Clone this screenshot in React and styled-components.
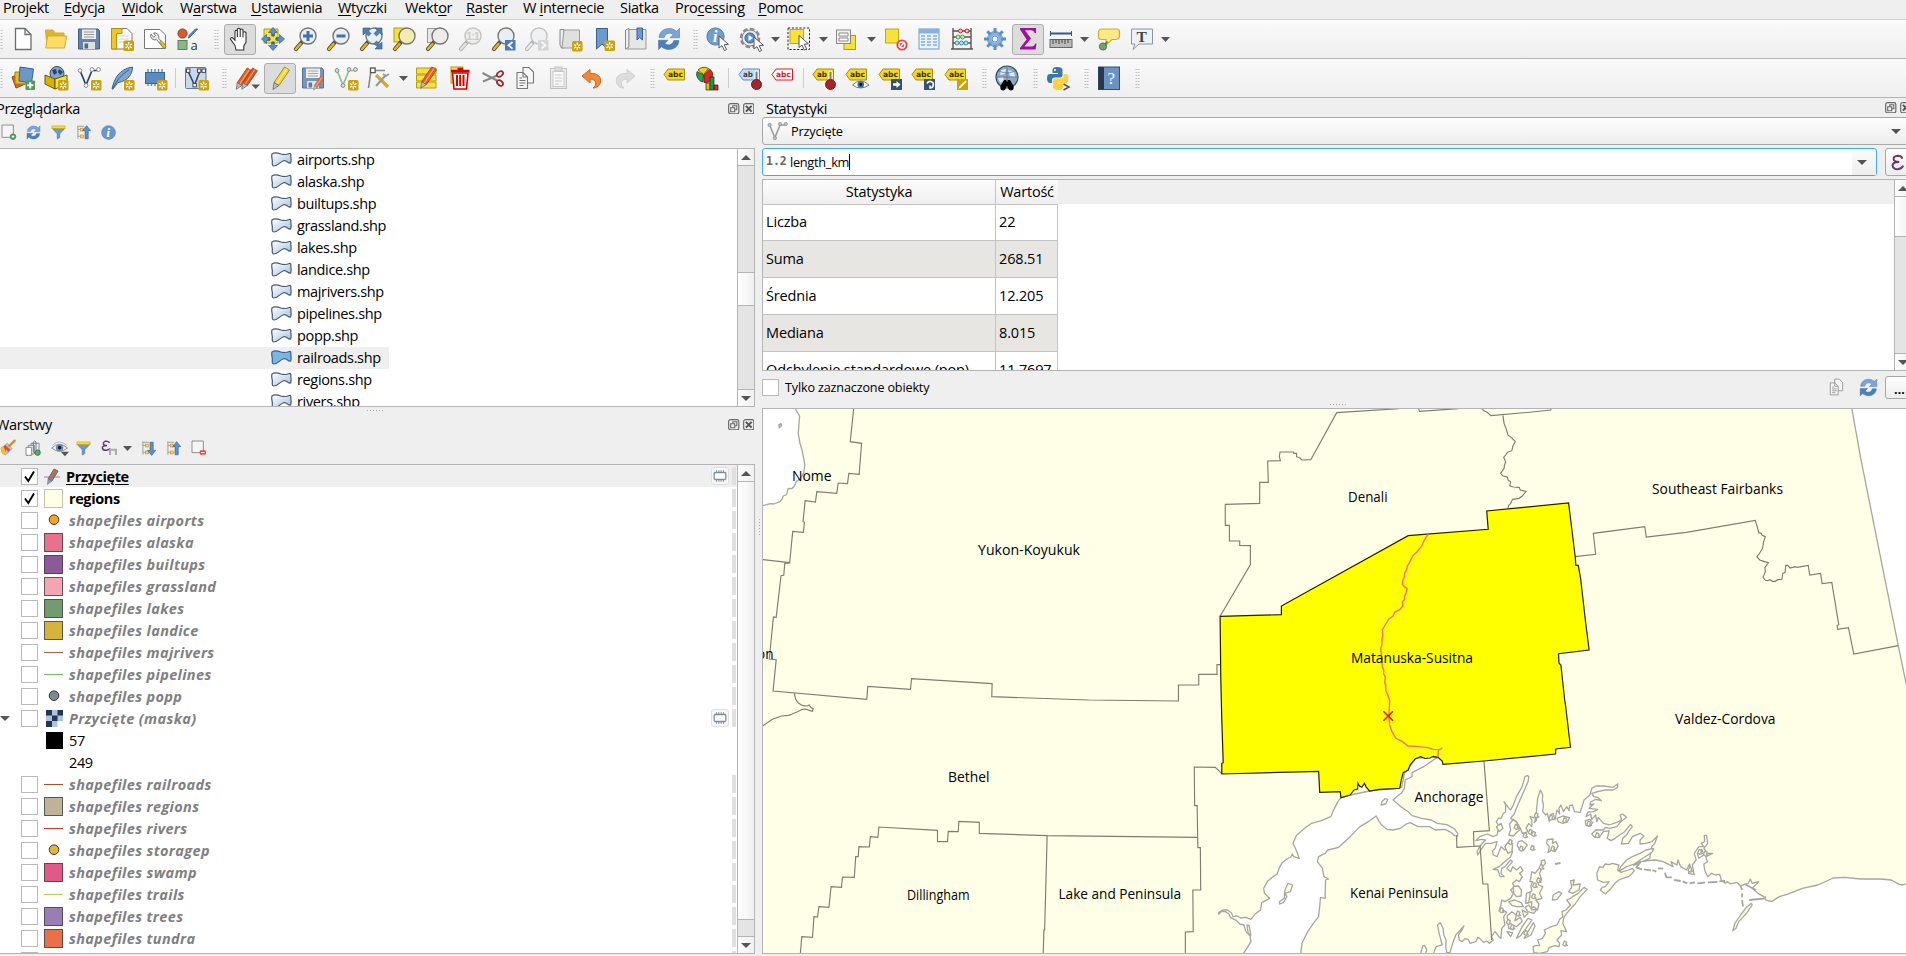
import React from 'react';
import styled, { createGlobalStyle } from 'styled-components';

const UI = '"Open Sans", "Noto Sans", sans-serif';

const GlobalStyle = createGlobalStyle`
  * { box-sizing: border-box; }
  body { margin: 0; background: #efefef; overflow: hidden; }
  svg { display: block; flex: none; }
`;

const Window = styled.div`
  width: 1906px;
  height: 956px;
  overflow: hidden;
  display: flex;
  flex-direction: column;
  background: #efefef;
  color: #000;
  font-family: ${UI};
  font-size: 14.5px;
  white-space: nowrap;
`;

/* ---------- menu and toolbars ---------- */

const MenuBar = styled.nav`
  height: 20px;
  flex: none;
  display: flex;
  padding-left: 3px;
  border-bottom: 1px solid #cfcfcf;
`;

const MenuItem = styled.span`
  width: ${(p) => p.$w}px;
  flex: none;
  line-height: 16px;
  letter-spacing: -0.3px;
  u { text-underline-offset: 2px; text-decoration-thickness: 1px; }
`;

const ToolBar = styled.div`
  height: 39px;
  flex: none;
  display: flex;
  align-items: center;
  background: linear-gradient(#fafafa, #efefef);
  border-bottom: 1px solid #b4b4b4;
`;

const ToolCell = styled.div`
  width: 33px;
  flex: none;
  display: flex;
  justify-content: center;
`;

const ToolButton = styled.div`
  width: 32px;
  height: 31px;
  display: flex;
  align-items: center;
  justify-content: center;
  border-radius: 3px;
  border: 1px solid ${(p) => (p.$on ? '#acacac' : 'transparent')};
  background: ${(p) => (p.$on ? '#dcdcdc' : 'transparent')};
  opacity: ${(p) => (p.$off ? 0.4 : 1)};
`;

const Grip = styled.div`
  width: ${(p) => p.$w || 18}px;
  height: 20px;
  flex: none;
  display: flex;
  justify-content: flex-end;
  padding-right: 4px;
  &::after {
    content: '';
    width: 5px;
    flex: none;
    background-image: radial-gradient(circle, #b2b2b2 0.7px, transparent 0.9px);
    background-size: 2.5px 3px;
  }
`;

const Divider = styled.div`
  width: ${(p) => p.$w || 8}px;
  height: 20px;
  flex: none;
  display: flex;
  justify-content: center;
  &::after { content: ''; width: 1px; background: #cdcdcd; }
`;

const ArrowCell = styled.div`
  width: 15.2px;
  flex: none;
  display: flex;
  padding-left: 3px;
`;

const Arrow = ({ up, w = 9, c = '#555' }) => (
  <svg width={w} height="5" viewBox="0 0 10 5" preserveAspectRatio="none">
    <path d={up ? 'M0 5L5 0L10 5Z' : 'M0 0L5 5L10 0Z'} fill={c} />
  </svg>
);

/* ---------- icon parts ---------- */

const Spark = ({ x = 14, y = 14 }) => (
  <g transform={`translate(${x} ${y})`}>
    <rect width="10.5" height="10.5" rx="1.5" fill="#c8a30b" />
    <path d="M5.2 1.6V9M2 3.4L8.4 7.2M8.4 3.4L2 7.2" stroke="#fff" strokeWidth="1.2" />
    <circle cx="5.2" cy="5.3" r="1.2" fill="#c8a30b" />
  </g>
);

const Lens = ({ fill = '#e8eef4', rim = '#777', handle = '#e9b416' }) => (
  <g>
    <path d="M8 15L2 22" stroke="#444" strokeWidth="4.2" strokeLinecap="round" />
    <path d="M6.5 17L2 22" stroke={handle} strokeWidth="2.6" strokeLinecap="round" />
    <circle cx="14" cy="9" r="8" fill={fill} stroke={rim} strokeWidth="1.4" />
  </g>
);

const Cursor = ({ x = 12, y = 9 }) => (
  <path transform={`translate(${x} ${y})`} d="M0 0L0 12L3 9.6L5.4 14.6L7.6 13.5L5.2 8.7L9.4 8.3Z" fill="#fff" stroke="#555" />
);

const Tag = ({ fill = '#f5d91c', edge = '#a98b10', text = 'abc', ink = '#3a3000', y = 3 }) => (
  <g>
    <path d={`M1 ${y + 5.5}L5 ${y}H21.5V${y + 11}H5Z`} fill={fill} stroke={edge} />
    <text x="5" y={y + 8.4} fontFamily="DejaVu Sans, sans-serif" fontWeight="700" fontSize="7.6" textLength={text.length * 5} lengthAdjust="spacingAndGlyphs" fill={ink}>{text}</text>
  </g>
);

const Pin = () => (
  <g>
    <path d="M18.5 16V6.5" stroke="#fff" strokeWidth="4" strokeLinecap="round" />
    <path d="M18.5 16V6.5" stroke="#777" strokeWidth="2" strokeLinecap="round" />
    <circle cx="18.5" cy="18.5" r="5" fill="#a3262a" stroke="#7c1a1d" />
  </g>
);

const Pencil = ({ body = '#e8601c', edge = '#9a3c0c', t }) => (
  <g transform={t}>
    <path d="M16.5 1L21.5 4L11 19.5L6 16.5Z" fill={body} stroke={edge} strokeWidth=".8" />
    <path d="M18.8 2.6L8.6 18" stroke="#fff" strokeOpacity=".45" strokeWidth="1.2" />
    <path d="M6 16.5L11 19.5L5 23.5Z" fill="#b9bcbc" stroke="#666" strokeWidth=".8" />
  </g>
);

const Vee = ({ c = '#2d4356', node = '#fff', nodeEdge = '#888' }) => (
  <g>
    <path d="M3 4.5L9 19L15 4.5H21" fill="none" stroke={c} strokeWidth="1.7" />
    {[[3, 4.5], [9, 19.5], [15, 3.5], [21.5, 3.5]].map(([x, y]) => (
      <circle key={x} cx={x} cy={y} r="1.9" fill={node} stroke={nodeEdge} />
    ))}
  </g>
);

const Refresh = () => (
  <g fill="#5b8fc7" stroke="#3c6c9f" strokeWidth=".5">
    <path d="M2 10.5C2.5 4 8 1 13.5 1.6C16 1.9 18 3 19.5 4.3L22.5 1.3V10.8H13L16.2 7.6C13.5 5.2 8.5 5.5 7.2 10.5Z" fill="#79a6d6" />
    <path d="M22 13.5C21.5 20 16 23 10.5 22.4C8 22.1 6 21 4.5 19.7L1.5 22.7V13.2H11L7.8 16.4C10.5 18.8 15.5 18.5 16.8 13.5Z" fill="#4a80bb" />
  </g>
);

const Funnel = () => (
  <g>
    <path d="M1.5 5L10 14V22.5L14 20V14L22.5 5Z" fill="#6c9acb" stroke="#45709f" />
    <rect x="1.5" y="1.5" width="21" height="4" fill="#f7de2f" stroke="#c7a715" />
  </g>
);

const Floppy = () => (
  <g>
    <path d="M1.5 2H21L22.5 4V22H1.5Z" fill="#6484ac" stroke="#3e5b80" />
    <rect x="5" y="2.5" width="14" height="9.5" fill="#ededed" />
    <path d="M7 5H17M7 7.5H17M7 10H17" stroke="#9a9a9a" strokeWidth="1.2" />
    <rect x="6" y="15" width="12" height="7" fill="#e0e0e0" />
    <rect x="7.5" y="16.5" width="3.6" height="5" fill="#4b6a92" />
  </g>
);

const Docs = () => (
  <g fill="#f6f6f6" stroke="#777" strokeWidth="1.1">
    <path d="M9 1.5H15L19.5 6V17H9Z" />
    <path d="M3 6.5H9L13.5 11V22.5H3Z" />
    <path d="M9 6.5V11H13.5M5.5 12H8M5.5 14.5H11.5M5.5 17H11.5M5.5 19.5H9.5" fill="none" />
  </g>
);

const TreeArrow = ({ down }) => (
  <g>
    <path d="M3 1V22M3 7H7M3 18H7M2 2H13" stroke="#9a9a9a" strokeWidth="1.5" fill="none" />
    <rect x="7" y="5" width="4.6" height="4.6" fill="#ffd36b" stroke="#e08a00" />
    <rect x="7" y="16" width="4.6" height="4.6" fill="#ffd36b" stroke="#e08a00" />
    <path transform={down ? 'translate(0 24) scale(1 -1)' : undefined} d="M17 1L23.5 9H19.5V22H14.5V9H10.5Z" fill="#5f93cc" stroke="#2f5a8c" />
  </g>
);

const Chip = ({ c = '#5a8bc0' }) => (
  <g stroke={c} strokeWidth="1.4">
    <path d="M5 3V20M8.5 3V20M12 3V20M15.5 3V20M19 3V20" />
    <rect x="2.5" y="6.5" width="19" height="11" fill={c} stroke="#3c668f" strokeWidth="1" />
  </g>
);

const Quad = ({ r }) => (
  <path transform={`rotate(${r} 12 12)`} d="M12 .5L16.5 5.5H13.5V9H10.5V5.5H7.5Z" fill="#5b8fc7" stroke="#35618f" strokeWidth=".7" />
);

const Corner = ({ t }) => <path transform={t} d="M3 1H10L7.8 3.2L11 6.5L8.5 9L5.2 5.8L3 8Z" fill="#4f7fb5" stroke="#2e5681" strokeWidth=".6" />;

const ICONS = {
  newFile: <path d="M4.5 1.5H14L20 7.5V22.5H4.5ZM14 1.5V7.5H20" fill="#fff" stroke="#6e6e6e" strokeWidth="1.3" />,
  open: (
    <g stroke="#d6ab26">
      <path d="M1.5 3H9L11 6H20V20H3Z" fill="#e0b436" />
      <path d="M3.5 9H22.8L20.5 21H1.8Z" fill="#fbdc69" />
    </g>
  ),
  save: <Floppy />,
  layout: (
    <g>
      <path d="M1.5 1.5H17L22 6.5V22H1.5Z" fill="#fff" stroke="#777" />
      <path d="M1.5 1.5H12V6.5H6.5V22H1.5Z" fill="#f3c623" stroke="#b98f0a" />
      <path d="M9 9H19M9 12H19M9 15H14" stroke="#ccc" />
      <Spark x={13.5} y={13.5} />
    </g>
  ),
  layouts: (
    <g>
      <path d="M1.5 2.5H17L22.5 8V21.5H1.5Z" fill="#fff" stroke="#777" />
      <path d="M8 7A4.2 4.2 0 0 0 13.5 12.6L20.5 21L23 18.6L15.6 11.4A4.2 4.2 0 0 0 10.5 6L12.5 8.6L10.5 10.2Z" fill="#e9e9e9" stroke="#777" />
      <path d="M16.5 15L21 21.5L23.2 19.2L18.2 13.6Z" fill="#e7bd1e" stroke="#927210" strokeWidth=".6" />
    </g>
  ),
  style: (
    <g>
      <circle cx="6.5" cy="6.5" r="4.6" fill="#d65b34" stroke="#9a3b1c" />
      <path d="M21.5 2L14 10L12.5 11L13.5 8L19.5 2Z" fill="#5b8fc7" stroke="#35618f" />
      <rect x="2" y="13.5" width="9" height="9" fill="#86b987" stroke="#4f8653" />
      <text x="14.5" y="22.5" fontFamily="Open Sans, sans-serif" fontSize="13" fill="#333">a</text>
    </g>
  ),
  hand: (
    <path d="M8 23L7 18.5L2.6 12.4Q2.4 10.2 4.6 10.8L7 13.2V4Q8 2.4 9.4 4V10V2Q10.8 .4 12.2 2V10V2.8Q13.6 1.2 15 2.8V10.4V5.4Q16.6 4 18 5.6V15L15.8 19V23Z" fill="#fff" stroke="#333" strokeWidth="1.1" />
  ),
  panSel: (
    <g>
      <path d="M3 2H17V16H3Z" fill="#f7e13c" stroke="#b59b12" />
      {[0, 90, 180, 270].map((r) => <Quad key={r} r={r} />)}
      <path d="M12 7V17M7 12H17" stroke="#35618f" strokeWidth="1.6" />
      <rect x="9.6" y="9.6" width="4.8" height="4.8" fill="#f7e13c" />
    </g>
  ),
  zoomIn: <g><Lens /><path d="M14 4V14M9 9H19" stroke="#3e73ad" strokeWidth="3" /></g>,
  zoomOut: <g><Lens /><path d="M9.5 9H18.5" stroke="#3e73ad" strokeWidth="3" /></g>,
  zoomFull: (
    <g>
      <Lens />
      <Corner /><Corner t="translate(25 0) scale(-1 1)" /><Corner t="translate(25 23) scale(-1 -1)" />
    </g>
  ),
  zoomSel: <g><rect x="1" y="1" width="11" height="14" fill="#f7e13c" stroke="#b59b12" /><Lens fill="#f4ecae" /></g>,
  zoomLayer: <g><rect x="1.5" y="1.5" width="11" height="14" fill="#e8e8e8" stroke="#999" /><Lens fill="#ececea" /></g>,
  zoomNative: (
    <g>
      <Lens fill="#e4e4e4" handle="#ccc" />
      <text x="7.6" y="13" fontFamily="Liberation Sans, sans-serif" fontWeight="700" fontSize="10" fill="#888" textLength="13">1:1</text>
    </g>
  ),
  zoomLast: <g><Lens /><rect x="13" y="13" width="10.5" height="10.5" fill="#4a7db5" /><path d="M20.5 15L16.5 18.3L20.5 21.6" stroke="#fff" strokeWidth="1.8" fill="none" /></g>,
  zoomNext: <g><Lens handle="#ddd" /><rect x="13" y="13" width="10.5" height="10.5" fill="#aaa" /><path d="M16.5 15L20.5 18.3L16.5 21.6" stroke="#fff" strokeWidth="1.8" fill="none" /></g>,
  mapView: (
    <g>
      <path d="M2 2.5H6V21H3.5L2 18Z" fill="#ececec" stroke="#888" />
      <path d="M6 3H21.5V21H4Z" fill="#e0e0e0" stroke="#999" />
      <Spark />
    </g>
  ),
  bookmarkNew: <g><path d="M5.5 1.5H16.5V22L11 17L5.5 22Z" fill="#6c9acb" stroke="#35618f" /><Spark x={13.5} y={13.5} /></g>,
  bookmarks: (
    <g>
      <path d="M1.5 3L5 1.5V20L1.5 22Z" fill="#eee" stroke="#888" />
      <path d="M5 2.5H22V22H2.5L5 20Z" fill="#e6e6e6" stroke="#999" />
      <path d="M13 1H18.5V13L15.7 10.5L13 13Z" fill="#6c9acb" stroke="#35618f" />
    </g>
  ),
  refresh: <Refresh />,
  identify: (
    <g>
      <circle cx="9.5" cy="9.5" r="8.6" fill="#6f9fd1" stroke="#4c7cae" />
      <text x="7" y="15" fontFamily="Liberation Serif, serif" fontStyle="italic" fontWeight="700" fontSize="16" fill="#fff">i</text>
      <Cursor x={13} y={9} />
    </g>
  ),
  action: (
    <g>
      <circle cx="11" cy="11" r="9" fill="#e5e5e5" stroke="#8a8a8a" strokeWidth="2.6" strokeDasharray="4.6 2.4" />
      <circle cx="11" cy="11" r="8" fill="#e9e9e9" stroke="#8a8a8a" />
      <circle cx="11" cy="11" r="5" fill="#5b8fc7" stroke="#35618f" />
      <path d="M9.5 8L14 11L9.5 14Z" fill="#fff" />
      <Cursor x={15} y={10} />
    </g>
  ),
  select: (
    <g>
      <rect x="1" y="1" width="21.5" height="21.5" fill="none" stroke="#222" strokeDasharray="2.2 1.6" />
      <rect x="3" y="2.5" width="13.5" height="14" fill="#f7e13c" stroke="#c7a715" />
      <Cursor x={12} y={8.5} />
    </g>
  ),
  selectForm: (
    <g>
      <rect x="9" y="8.5" width="11.5" height="14" fill="#f7e13c" stroke="#b59b12" />
      <rect x="1.5" y="3" width="14" height="13.5" fill="#f2f2f2" stroke="#888" />
      <path d="M4 6H13V9H4ZM4 11H13V14H4Z" fill="#fff" stroke="#888" />
    </g>
  ),
  deselect: (
    <g>
      <rect x="1.5" y="2" width="13" height="14" fill="#f7e13c" stroke="#c7a715" />
      <circle cx="18" cy="18" r="5.6" fill="#e0484c" />
      <circle cx="18" cy="18" r="3" fill="none" stroke="#fff" strokeWidth="1.3" />
      <path d="M15.8 20.2L20.2 15.8" stroke="#fff" strokeWidth="1.3" />
    </g>
  ),
  table: (
    <g>
      <rect x="2" y="2" width="20" height="20" fill="#eaf2fa" stroke="#6b9bcd" />
      <rect x="2" y="2" width="20" height="4.5" fill="#86b3e0" />
      <path d="M4 9H8M10 9H14M16 9H20M4 12H8M10 12H14M16 12H20M4 15H8M10 15H14M16 15H20M4 18H8M10 18H14M16 18H20" stroke="#86afd8" strokeWidth="1.4" />
    </g>
  ),
  abacus: (
    <g>
      <path d="M3 1V22M21 1V22M3 4H21M3 10H21M3 16H21M1 22H23" stroke="#555" strokeWidth="1.4" />
      <g stroke="#c22" fill="#f7bcbc"><circle cx="10.5" cy="4" r="2" /><circle cx="17" cy="4" r="2" /></g>
      <g stroke="#4a9a4a" fill="#c6e8c6"><circle cx="8" cy="10" r="2" /><circle cx="12.5" cy="10" r="2" /></g>
      <g stroke="#3f83a8" fill="#bfe2f2"><circle cx="7" cy="16" r="2" /><circle cx="11.5" cy="16" r="2" /><circle cx="16" cy="16" r="2" /></g>
    </g>
  ),
  gear: (
    <g stroke="#5c8fca" fill="none">
      <circle cx="12" cy="12" r="5.4" strokeWidth="4" stroke="#86afe0" />
      {[0, 45, 90, 135].map((r) => <path key={r} d="M12 1V6M12 18V23" strokeWidth="3" transform={`rotate(${r} 12 12)`} />)}
      <circle cx="12" cy="12" r="7.6" strokeWidth=".8" />
      <circle cx="12" cy="12" r="3" fill="#f4f4f4" />
    </g>
  ),
  sigma: <path d="M4 1H20V6H18.5Q18 3.2 15 3.2H9L15 11.5L8.4 19.5H15.6Q18.4 19.5 19.2 16.5H20.5L19.6 22.5H4V21L10.6 12.6L4 2.6Z" fill="#a010a0" />,
  measure: (
    <g>
      <path d="M1.5 4V9M22.5 4V9" stroke="#2f5a8c" strokeWidth="1" />
      <path d="M1 6.5H23" stroke="#2f5a8c" strokeWidth="2" />
      <rect x="1" y="12.5" width="22" height="8" fill="#bbb" stroke="#666" />
      <path d="M4 12.5V17M7 12.5V16M10 12.5V17M13 12.5V16M16 12.5V17M19 12.5V16" stroke="#444" />
    </g>
  ),
  tips: (
    <g>
      <path d="M5 2H20Q23 2.5 22.5 6V9Q22.5 12 19 12.5H15L9 18V12.5H4Q1 12 1.5 8V5Q1.5 2.5 5 2Z" fill="#fbe98a" stroke="#cfae1b" strokeWidth="1.2" />
      <circle cx="6" cy="19.5" r="3.6" fill="#72a174" stroke="#497a4d" />
      <path d="M8 17.5L10.5 14.5" stroke="#497a4d" strokeWidth="1.6" />
    </g>
  ),
  annotation: (
    <g>
      <path d="M1.5 2H22.5V17H9L3 22.5L5 17H1.5Z" fill="#ecf3f8" stroke="#8795a1" />
      <text x="6.6" y="15" fontFamily="Liberation Serif, serif" fontWeight="700" fontSize="15.5" fill="#444">T</text>
    </g>
  ),
  sources: (
    <g>
      <path d="M1 11L10 7L14 18L5 22Z" fill="#d9622b" stroke="#97400f" />
      <path d="M4 6H16V18H4Z" fill="#e8b92c" stroke="#a67c0b" />
      <path d="M9 1L22.5 3L20.5 17L8 15Z" fill="#6c97c9" stroke="#35618f" />
      <rect x="14.5" y="14.5" width="9.5" height="9.5" rx="1" fill="#4f9a58" />
      <path d="M19.2 16.2V22.4M16.2 19.2H22.4" stroke="#fff" strokeWidth="2" />
    </g>
  ),
  geopackage: (
    <g>
      <circle cx="13" cy="7.5" r="7" fill="#7ea6d0" stroke="#35506e" />
      <path d="M8 4L12 3L13 7L10 9ZM15 3L19 6L16 9L14 6Z" fill="#2c4560" />
      <path d="M1 9L11 13V23L1 18Z" fill="#d6b30f" stroke="#6a5800" />
      <path d="M11 13L23 9V18L11 23Z" fill="#f7e13c" stroke="#6a5800" />
      <Spark />
    </g>
  ),
  shapefile: <g><Vee /><Spark /></g>,
  spatialite: (
    <g>
      <path d="M2 23C4 13 9 3 22.5 1C22.5 8 18 15 8 16.5L3 23Z" fill="#7fa6d2" stroke="#35618f" />
      <path d="M3 22C7 14 12 8 19 4" stroke="#35618f" fill="none" />
      <Spark />
    </g>
  ),
  scratch: <g><Chip /><Spark /></g>,
  virtual: (
    <g>
      <rect x="1.5" y="1.5" width="20.5" height="21" rx="1" fill="#c7d9ec" stroke="#5d7ea3" />
      <path d="M4 5L10.5 19L16 5H19.5" fill="none" stroke="#2d4356" strokeWidth="1.5" />
      <g fill="#fff" stroke="#445"><rect x="2.5" y="3" width="3.4" height="3.4" /><rect x="13.5" y="3" width="3.4" height="3.4" /><rect x="18" y="3" width="3.4" height="3.4" /><rect x="9" y="17.5" width="3.4" height="3.4" /></g>
      <Spark x={14.5} y={14} />
    </g>
  ),
  edits: (
    <g>
      <Pencil t="translate(-3.5 1) scale(.95)" /><Pencil t="translate(2 1) scale(.95)" body="#d5541f" />
      <path d="M16.5 18.5H25L20.7 23Z" fill="#555" />
    </g>
  ),
  pencil: <Pencil body="#f0d83b" edge="#8e7a10" />,
  saveEdits: <g opacity=".85"><Floppy /><Pencil t="translate(9.5 9.5) scale(.62)" /></g>,
  addLine: <g><Vee c="#8fc091" nodeEdge="#888" node="#ddd" /><Spark /></g>,
  vertex: (
    <g>
      <path d="M4 4.5L1.5 22M4 4.5H18" stroke="#888" strokeWidth="1.6" fill="none" />
      <rect x="3.5" y="2" width="4.6" height="4.6" fill="#fff" stroke="#555" strokeWidth="1.3" />
      <path d="M9 9L21 21" stroke="#d6a82b" strokeWidth="3.2" />
      <path d="M19 9L9 20" stroke="#999" strokeWidth="2.2" />
      <path d="M16 8L19 10L22 8" stroke="#999" strokeWidth="1.8" fill="none" />
    </g>
  ),
  modify: (
    <g>
      <path d="M1.5 2H21V8H1.5ZM1.5 9H21V15H1.5ZM1.5 16H21V22H1.5Z" fill="#f7e13c" stroke="#b59b12" />
      <Pencil t="translate(1 0) scale(.95)" />
    </g>
  ),
  trash: (
    <g>
      <rect x="3" y="1" width="12" height="16" fill="#f7e13c" stroke="#b59b12" />
      <path d="M4.5 7H20L18.5 23H6Z" fill="#fff" stroke="#d40000" strokeWidth="1.6" />
      <path d="M9 9V20M12.2 9V20M15.5 9V20" stroke="#d40000" strokeWidth="2" />
      <path d="M3 5H21.5M9.5 3H15" stroke="#d40000" strokeWidth="2.4" />
    </g>
  ),
  cut: (
    <g fill="none">
      <path d="M1.5 7L16 14.5M2 15.5L16 9.5" stroke="#888" strokeWidth="2" />
      <ellipse cx="19" cy="8" rx="3.4" ry="2.3" stroke="#a3262a" strokeWidth="1.7" transform="rotate(-35 19 8)" />
      <ellipse cx="19" cy="17" rx="3.4" ry="2.3" stroke="#a3262a" strokeWidth="1.7" transform="rotate(40 19 17)" />
    </g>
  ),
  copy: <Docs />,
  paste: (
    <g>
      <rect x="3.5" y="2.5" width="16" height="20" fill="#ddd" stroke="#777" />
      <rect x="6" y="5.5" width="11" height="15" fill="#fff" stroke="#888" />
      <rect x="8" y="1" width="7" height="4" fill="#bbb" stroke="#777" />
      <path d="M8 9H15M8 12H15M8 15H15M8 18H12" stroke="#888" />
    </g>
  ),
  undo: <path d="M2 10L10 3.5V7.5C18 7 21.5 11 20.5 16C20 19.5 17 21.8 13 22C17 19.5 17 13 10 13V17Z" fill="#ee8a3c" stroke="#cf6512" />,
  redo: <path d="M22 10L14 3.5V7.5C6 7 2.5 11 3.5 16C4 19.5 7 21.8 11 22C7 19.5 7 13 14 13V17Z" fill="#bbb" stroke="#999" />,
  label: <Tag />,
  diagram: (
    <g>
      <path d="M7.5 9L1 5.5A8 8 0 0 0 7 16Z" fill="#22a44a" stroke="#222" strokeWidth=".7" />
      <path d="M7.5 8.5L2 4A8 8 0 0 1 12.5 2.5Z" fill="#f7d000" stroke="#222" strokeWidth=".7" />
      <path d="M8 9L13.5 3A7.5 7.5 0 0 1 8 16.5Z" fill="#e3231c" stroke="#222" strokeWidth=".7" />
      <path d="M10 17H14V24H10Z" fill="#f7b500" stroke="#222" strokeWidth=".7" />
      <path d="M14 11H18V24H14Z" fill="#1c9a3e" stroke="#222" strokeWidth=".7" />
      <path d="M18 19H22V24H18Z" fill="#e3231c" stroke="#222" strokeWidth=".7" />
    </g>
  ),
  pinLabel: <g><Tag fill="#c6dcf5" edge="#5b8fc7" ink="#345" text="ab" /><Pin /></g>,
  redLabel: <Tag fill="#fff" edge="#e2191c" ink="#e2191c" />,
  pinYellow: <g><Tag text="ab" /><Pin /></g>,
  showLabel: (
    <g>
      <Tag />
      <path d="M7.5 19Q15.5 11 24 19Q15.5 25 7.5 19Z" fill="#fff" stroke="#777" />
      <circle cx="15.8" cy="18.5" r="3.3" fill="#3d6a9c" /><circle cx="15.8" cy="18.5" r="1.4" fill="#111" />
    </g>
  ),
  moveLabel: <g><Tag /><rect x="13" y="13" width="11" height="11" fill="#35536f" /><path d="M15 17.3H18.5V15L22.5 18.5L18.5 22V19.7H15Z" fill="#fff" /></g>,
  rotateLabel: <g><Tag /><rect x="13" y="13" width="11" height="11" fill="#35536f" /><path d="M16 17.5A3.3 3.3 0 1 1 19 22L19 19.5" stroke="#fff" strokeWidth="1.6" fill="none" /></g>,
  editLabel: <g><Tag /><rect x="13" y="13" width="11" height="11" fill="#c8a30b" /><path d="M21.6 14.4L15.6 20.2L14.6 22.8L17 21.6L22.8 15.8Z" fill="#fff" /></g>,
  metasearch: (
    <g>
      <circle cx="12" cy="11" r="11" fill="#8fa9c4" stroke="#33506e" strokeWidth="1.2" />
      <path d="M6 4L11 3L10 8L5 9ZM13 4L19 6L20 11L15 10ZM3 12L8 11L9 15L5 17Z" fill="#dfe8f1" />
      <path d="M1 11H23M12 0V22M4 5Q12 9 20 5" stroke="#4a6885" strokeWidth=".6" fill="none" />
      <path d="M5.5 20L9 14H11L12 16L13 14H15L18.5 20Q19.5 24.5 15.5 24.5Q13 24 12.8 20.5H11.2Q11 24 8.5 24.5Q4.5 24.5 5.5 20Z" fill="#000" />
    </g>
  ),
  python: (
    <g>
      <path d="M11 1Q6.5 1 6.5 4V7H12V8H4Q1 8 1 12.2Q1 17 4 17H6V14Q6 11.5 9 11.5H14Q16.5 11.5 16.5 9V4Q16.5 1 11 1Z" fill="#3b77a8" />
      <circle cx="9" cy="4" r="1" fill="#fff" />
      <path d="M12.5 24Q17 24 17 21V18H11.5V17H19.5Q22.5 17 22.5 12.5Q22.5 8 19.5 8H17.5V10.5Q17.5 12.6 14.5 12.6H9.5Q7 12.6 7 15V21Q7 24 12.5 24Z" fill="#fdce40" />
      <path d="M17.5 18L23 21L17.5 24" stroke="#555" strokeWidth="1.6" fill="none" />
    </g>
  ),
  help: (
    <g>
      <rect x="1.5" y="1" width="21" height="22.5" fill="#6a93c4" stroke="#31506f" />
      <rect x="1.5" y="1" width="5.5" height="22.5" fill="#26384a" />
      <text x="10.5" y="17.5" fontFamily="Liberation Serif, serif" fontSize="17" fill="#fff">?</text>
    </g>
  ),
  addLayer: <g><path d="M3 1.5H20V20H3Z" fill="#f5f5f5" stroke="#888" strokeWidth="1.4" /><circle cx="19.5" cy="19" r="4.2" fill="#5aa567" stroke="#3f7f4b" /><path d="M19.5 17V21M17.5 19H21.5" stroke="#fff" strokeWidth="1.2" /></g>,
  funnel: <Funnel />,
  collapse: <TreeArrow />,
  expand: <TreeArrow down />,
  info: (
    <g>
      <circle cx="12" cy="12" r="11" fill="#6897cb" stroke="#4c7cae" />
      <text x="8.6" y="19" fontFamily="Liberation Serif, serif" fontStyle="italic" fontWeight="700" fontSize="20" fill="#fff">i</text>
    </g>
  ),
  brush: (
    <g>
      <path d="M1 12L8 7L16 15L8 23L3 20Z" fill="#e8483a" />
      <path d="M1 12L5 9L10 21L8 23L3 20Z" fill="#f7c21f" />
      <path d="M9 14L14 19L8 23Z" fill="#8fc3e8" />
      <path d="M8 7L11 5L18 13L16 15Z" fill="#ccc" stroke="#888" />
      <path d="M14 9L22 1" stroke="#cf8f2a" strokeWidth="3.6" strokeLinecap="round" />
    </g>
  ),
  group: (
    <g fill="#f3f3f3" stroke="#888" strokeWidth="1.5">
      <path d="M9 5H21V18H9Z" /><path d="M5 8H14V21H5Z" /><path d="M1.5 11H10V23H1.5Z" fill="#fff" />
      <path d="M12.5 19V3Q14.5 0 16.5 3V16" fill="none" stroke="#4a7db5" />
      <circle cx="19" cy="19" r="4" fill="#5aa567" stroke="#3f7f4b" />
    </g>
  ),
  eye: (
    <g>
      <path d="M1 12Q11 2 22 12Q11 21 1 12Z" fill="#e9eef2" stroke="#888" strokeWidth="1.2" />
      <path d="M2 8Q11 0 21 8" stroke="#aaa" fill="none" />
      <circle cx="11.5" cy="11.5" r="5" fill="#6d8fb3" /><circle cx="11.5" cy="11.5" r="2.4" fill="#223" />
      <path d="M13 17H24L18.5 23Z" fill="#555" />
    </g>
  ),
  epsilon: (
    <g>
      <path d="M13 4Q10 1 6 2Q2 4 4.5 7.5Q6 8.4 9 8.2M9 8.2Q2 8 2 12Q3 16 8 15.4Q12 15 13.5 12.5" fill="none" stroke="#673a76" strokeWidth="2.2" />
      <path d="M13.5 22.5V14.5H22.5V22.5" fill="none" stroke="#aaa" strokeWidth="3" />
    </g>
  ),
  epsilonBig: <path d="M19 6.5Q17.5 2.5 12.5 2.5Q6 3 6.5 7.5Q7.5 11.4 14.5 11.2M13 11.2Q5 11.6 5 16.5Q6 21.8 12.5 21.6Q18 21 20 16.5" fill="none" stroke="#673a76" strokeWidth="2.8" />,
  remove: <g><path d="M3 1.5H20V19H3Z" fill="#f5f5f5" stroke="#888" strokeWidth="1.4" /><rect x="14.5" y="15.5" width="9.5" height="6.5" rx="2" fill="#e5484d" /><path d="M16.5 18.8H22" stroke="#fff" strokeWidth="1.6" /></g>,
  lineGrey: <Vee c="#999" node="#bbb" nodeEdge="#999" />,
  memory: (
    <g stroke="#7d8c9a" fill="none">
      <path d="M6 2V22M10 2V22M14 2V22M18 2V22" strokeWidth="1.6" />
      <rect x="2" y="6" width="20" height="12" rx="2" fill="#fff" strokeWidth="2.2" />
    </g>
  ),
};

const Icon = ({ name, size = 24 }) => (
  <svg width={size} height={size} viewBox="0 0 24 24" overflow="visible">{ICONS[name]}</svg>
);

const PolygonIcon = ({ on }) => (
  <svg width="21" height="15" viewBox="0 0 21 15">
    <path
      d="M2.4 1.2Q5.5 .4 10 2Q14.5 3.2 18.4 1.5Q20.2 1 19.8 4.5Q20.4 8 19.7 11Q18.5 11.4 16.5 10Q14.5 8.2 12.5 8.8Q10.5 9.6 8 11.6Q5 14 2.6 14Q.8 13.8 1.4 9Q.3 4 1 2Z"
      fill={on ? '#7ab5e3' : 'url(#polyFill)'}
      stroke={on ? '#35618f' : '#45586d'}
      strokeWidth="1.2"
    />
  </svg>
);

/* ---------- docks ---------- */

const Main = styled.div`
  flex: 1;
  min-height: 0;
  display: flex;
`;

const LeftColumn = styled.div`
  width: 755px;
  flex: none;
  display: flex;
  flex-direction: column;
`;

const VSplitter = styled.div`
  width: 7px;
  flex: none;
  display: flex;
  justify-content: flex-end;
  padding: 421px 2px 0 0;
  &::after {
    content: '';
    width: 1px;
    height: 17px;
    background: repeating-linear-gradient(#aaa 0 1px, transparent 1px 3px);
  }
`;

const HSplitter = styled.div`
  height: ${(p) => p.$h}px;
  flex: none;
  display: flex;
  padding: ${(p) => p.$top || 0}px 0 0 ${(p) => p.$x}px;
  &::after {
    content: '';
    width: 17px;
    height: 1px;
    background: repeating-linear-gradient(90deg, #aaa 0 1px, transparent 1px 3px);
  }
`;

const RightColumn = styled.div`
  width: 1150px;
  flex: none;
  display: flex;
  flex-direction: column;
`;

const DockTitle = styled.div`
  height: ${(p) => p.$h}px;
  flex: none;
  display: flex;
  align-items: center;
  gap: 3px;
  padding-right: 1px;
  margin-left: ${(p) => p.$x}px;
  letter-spacing: -0.3px;
  span { flex: 1; padding-top: ${(p) => p.$drop || 0}px; }
`;

const DockGlyph = ({ close }) => (
  <svg width="11.5" height="11.5" viewBox="0 0 12 12">
    <rect x=".7" y=".7" width="10.6" height="10.6" rx="2" fill="none" stroke="#666" strokeWidth="1.2" />
    {close
      ? <path d="M3 3L9 9M9 3L3 9" stroke="#555" strokeWidth="2.2" />
      : <path d="M5 5V2.8H9.2V7H7M2.8 5H7V9.2H2.8Z" fill="none" stroke="#666" strokeWidth="1.1" />}
  </svg>
);

const DockTools = styled.div`
  height: ${(p) => p.$h}px;
  flex: none;
  display: flex;
  align-items: center;
  padding-bottom: 3px;
`;

const SmallCell = styled.div`
  width: ${(p) => p.$w || 25}px;
  flex: none;
  display: flex;
  justify-content: center;
`;

const Frame = styled.div`
  height: ${(p) => p.$h}px;
  flex: none;
  display: flex;
  background: #fff;
  border: 1px solid #b4b4b4;
  border-left: ${(p) => (p.$left ? '1px solid #b4b4b4' : 'none')};
  overflow: hidden;
`;

const Rows = styled.div`
  flex: 1;
  min-width: 0;
  overflow: hidden;
`;

const ScrollColumn = styled.div`
  width: 17px;
  flex: none;
  display: flex;
  flex-direction: column;
  background: #e4e4e4;
  border-left: 1px solid #b4b4b4;
`;

const ScrollButton = styled.div`
  height: 17px;
  flex: none;
  display: flex;
  align-items: center;
  justify-content: center;
  background: linear-gradient(90deg, #fdfdfd, #f0f0f0);
  border-top: ${(p) => (p.$end ? '1px solid #b4b4b4' : 'none')};
  border-bottom: ${(p) => (p.$end ? 'none' : '1px solid #b4b4b4')};
`;

const ScrollSpace = styled.div`
  height: ${(p) => p.$h}px;
  flex: none;
`;

const ScrollThumb = styled.div`
  height: ${(p) => p.$h}px;
  flex: none;
  background: linear-gradient(90deg, #fff, #f0f0f0);
  border: solid #b4b4b4;
  border-width: ${(p) => (p.$first ? 0 : 1)}px 0 1px;
`;

const Scroll = ({ before, thumb, after, first }) => (
  <ScrollColumn>
    <ScrollButton><Arrow up w={10} /></ScrollButton>
    <ScrollSpace $h={before} />
    <ScrollThumb $h={thumb} $first={first} />
    <ScrollSpace $h={after} />
    <ScrollButton $end><Arrow w={10} /></ScrollButton>
  </ScrollColumn>
);

const FileRow = styled.div`
  height: 22px;
  width: 389px;
  display: flex;
  padding-left: 270.5px;
  gap: 5.5px;
  background: ${(p) => (p.$on ? '#efefef' : 'transparent')};
  line-height: 22px;
  letter-spacing: -0.35px;
`;

const FileIcon = styled.div`
  width: 21px;
  padding-top: 3px;
`;

const LayerRow = styled.div`
  height: 22px;
  display: flex;
  align-items: center;
  background: ${(p) => (p.$on ? '#efefef' : 'transparent')};
`;

const Expander = styled.div`
  width: 21px;
  flex: none;
`;

const CheckBox = styled.div`
  width: 17px;
  height: 17px;
  flex: none;
  background: #fff;
  border: 1px solid #b9b9b9;
  visibility: ${(p) => (p.$none ? 'hidden' : 'visible')};
`;

const SymbolCell = styled.div`
  width: 19px;
  margin: 0 ${(p) => (p.$tight ? 3 : 6)}px 0 6px;
  flex: none;
`;

const LayerName = styled.span`
  flex: 1;
  line-height: 21px;
  font-weight: ${(p) => (p.$plain ? 400 : 700)};
  font-style: ${(p) => (p.$off ? 'italic' : 'normal')};
  color: ${(p) => (p.$off ? '#808080' : '#000')};
  text-decoration: ${(p) => (p.$under ? 'underline' : 'none')};
  text-underline-offset: 2px;
  letter-spacing: ${(p) => (p.$off ? 0.35 : -0.4)}px;
`;

const MemoryBadge = styled.div`
  width: 18px;
  height: 18px;
  margin-right: 3px;
  display: flex;
  align-items: center;
  justify-content: center;
  border: 1px solid #dedede;
  border-radius: 3px;
  background: #f7f7f7;
`;

const RowMark = styled.div`
  width: 4px;
  height: 18px;
  margin-right: 1px;
  background: ${(p) => (p.$none ? 'transparent' : '#e0e0e0')};
`;

const Symbol = ({ kind, color }) => (
  <svg width="19" height="19" viewBox="0 0 19 19">
    {kind === 'fill' && <rect x=".5" y=".5" width="18" height="18" fill={color} stroke="#000" strokeOpacity=".6" />}
    {kind === 'soft' && <rect x=".5" y=".5" width="18" height="18" fill={color} stroke="#c3c3b0" />}
    {kind === 'line' && <path d="M0 9.5H19" stroke={color} strokeWidth="1.1" />}
    {kind === 'dot' && <circle cx="10" cy="8.7" r="4.8" fill={color} stroke="#333" />}
    {kind === 'black' && <rect x="2" y="1" width="17" height="17" fill="#000" />}
    {kind === 'edit' && (
      <g>
        <path d="M0 10H16" stroke="#c9a0cc" strokeWidth="1.6" />
        <path d="M10 2L14 4L8 14L4 12Z" fill="#a9755a" stroke="#5d6b7d" />
        <path d="M4 12L8 14L3.5 17.5Z" fill="#7fa0c4" stroke="#5d7ea3" strokeWidth=".6" />
      </g>
    )}
    {kind === 'raster' && (
      <g>
        <rect x="2" y="1" width="17" height="17" fill="#a9c4e4" />
        <path d="M2 1H8V6.5H2ZM13.5 1H19V6.5H13.5ZM8 6.5H13.5V12H8ZM2 12H8V18H2Z" fill="#27374b" />
        <path d="M13.5 12H19V18H13.5Z" fill="#fff" />
      </g>
    )}
  </svg>
);

const Check = () => (
  <svg width="15" height="15" viewBox="0 0 15 15">
    <path d="M3 7.5L6.3 12L12 2.5" fill="none" stroke="#000" strokeWidth="1.9" />
  </svg>
);

/* ---------- statistics ---------- */

const ComboBox = styled.div`
  height: 28px;
  flex: none;
  display: flex;
  align-items: center;
  gap: 3px;
  padding: 0 10px 0 4px;
  border: 1px solid #a8a8a8;
  border-radius: 3px;
  background: linear-gradient(#fefefe, #ededed);
  font-size: 12.8px;
  letter-spacing: -0.2px;
  span { flex: 1; }
`;

const FieldLine = styled.div`
  display: flex;
  gap: 8px;
  margin: 3px 0;
`;

const FieldEdit = styled.div`
  width: 1115px;
  height: 28px;
  flex: none;
  display: flex;
  align-items: center;
  padding-left: 3px;
  border: 1px solid #3ea9f5;
  border-radius: 3px;
  background: #fff;
  font-size: 12.8px;
  letter-spacing: -0.3px;
`;

const FieldType = styled.b`
  font: 700 11.5px "DejaVu Sans Mono", monospace;
  letter-spacing: 0;
  color: #666;
  width: 24px;
  padding-bottom: 2px;
`;

const FieldValue = styled.span`
  flex: 1;
  display: flex;
  align-items: center;
  &::after { content: ''; width: 1px; height: 16px; background: #000; }
`;

const FieldDrop = styled.div`
  width: 24px;
  height: 25px;
  display: flex;
  align-items: center;
  padding-left: 5px;
  background: linear-gradient(#fbfbfb, #eee);
`;

const FlatButton = styled.div`
  width: 32px;
  height: ${(p) => p.$h}px;
  flex: none;
  display: flex;
  align-items: center;
  padding-left: ${(p) => p.$pad}px;
  border: 1px solid #a8a8a8;
  border-radius: 3px;
  background: linear-gradient(#fefefe, #ededed);
  b { padding-top: 4px; letter-spacing: 0; }
`;

const TableArea = styled.div`
  width: 1131px;
  flex: none;
  overflow: hidden;
`;

const TableLine = styled.div`
  display: grid;
  grid-template-columns: 233px 62px;
  width: 295px;
  height: 37px;
  background: ${(p) => (p.$alt ? '#e8e6e2' : '#fff')};
`;

const Cell = styled.div`
  padding-left: 3px;
  line-height: 36px;
  border: solid #c4c4c4;
  border-width: 0 1px 1px 0;
  letter-spacing: -0.15px;
`;

const TableHead = styled.div`
  height: 24px;
  background: #efefef;
`;

const HeadLine = styled(TableLine)`
  height: 24px;
  background: linear-gradient(#fcfcfc, #efefef);
`;

const HeadCell = styled(Cell)`
  line-height: 24px;
  text-align: center;
  padding-left: 0;
  letter-spacing: -0.2px;
  border-right: ${(p) => (p.$last ? 'none' : '1px solid #c4c4c4')};
`;

const OptionLine = styled.div`
  height: 32px;
  flex: none;
  display: flex;
  align-items: center;
  font-size: 12.6px;
`;

const OptionText = styled.span`
  width: 1048px;
  flex: none;
  padding-left: 6px;
  letter-spacing: -0.15px;
`;

const OptionIcon = styled.div`
  width: ${(p) => p.$w}px;
  flex: none;
  padding-left: 1px;
  opacity: ${(p) => (p.$dim ? 0.8 : 1)};
`;

const MapFrame = styled.div`
  height: 546px;
  flex: none;
  border: 1px solid #b4b4b4;
  background: #fff;
  overflow: hidden;
`;

/* ---------- data ---------- */

const MENU = [
  ['Pro', 'j', 'ekt', 61], ['', 'E', 'dycja', 58], ['', 'W', 'idok', 58], ['W', 'a', 'rstwa', 71],
  ['', 'U', 'stawienia', 87], ['', 'W', 'tyczki', 67], ['Wekt', 'o', 'r', 61], ['', 'R', 'aster', 57],
  ['W ', 'i', 'nternecie', 97], ['Siatka', '', '', 55], ['Pro', 'c', 'essing', 83], ['', 'P', 'omoc', 60],
];

const BAR_ONE = [
  ['grip', 6.5], 'newFile', 'open', 'save', 'layout', 'layouts', 'style', ['grip', 18.5],
  'hand*', 'panSel', 'zoomIn', 'zoomOut', 'zoomFull', 'zoomSel', 'zoomLayer', 'zoomNative-', 'zoomLast', 'zoomNext-',
  'mapView', 'bookmarkNew', 'bookmarks', 'refresh', ['grip', 16.5],
  'identify', 'action', ['arrow'], 'select', ['arrow'], 'selectForm', ['arrow'],
  'deselect', 'table', 'abacus', 'gear', 'sigma*', 'measure', ['arrow'], 'tips', 'annotation', ['arrow'],
];

const BAR_TWO = [
  ['grip', 6.5], 'sources', 'geopackage', 'shapefile', 'spatialite', 'scratch', ['line', 8], 'virtual', ['grip', 18],
  'edits', 'pencil*', 'saveEdits', 'addLine', 'vertex', ['arrow'], 'modify', 'trash', 'cut', 'copy', 'paste-', 'undo', 'redo-',
  ['grip', 17], 'label', 'diagram', ['line', 8.5], 'pinLabel', 'redLabel', ['line', 8.5],
  'pinYellow', 'showLabel', 'moveLabel', 'rotateLabel', 'editLabel', ['grip', 18], 'metasearch', ['grip', 18],
  'python', ['grip', 18], 'help', ['grip', 18],
];

const FILES = ['airports', 'alaska', 'builtups', 'grassland', 'lakes', 'landice', 'majrivers', 'pipelines', 'popp', 'railroads', 'regions', 'rivers'];

const LAYERS = [
  { name: 'Przycięte', kind: 'edit', checked: true, memory: true, active: true },
  { name: 'regions', kind: 'soft', color: '#ffffe8', checked: true },
  { name: 'shapefiles airports', kind: 'dot', color: '#ffa01e', off: true },
  { name: 'shapefiles alaska', kind: 'fill', color: '#e8718d', off: true },
  { name: 'shapefiles builtups', kind: 'fill', color: '#8d5a99', off: true },
  { name: 'shapefiles grassland', kind: 'fill', color: '#f3a6b2', off: true },
  { name: 'shapefiles lakes', kind: 'fill', color: '#729b6f', off: true },
  { name: 'shapefiles landice', kind: 'fill', color: '#d5b43c', off: true },
  { name: 'shapefiles majrivers', kind: 'line', color: '#a9674b', off: true },
  { name: 'shapefiles pipelines', kind: 'line', color: '#7db764', off: true },
  { name: 'shapefiles popp', kind: 'dot', color: '#7d8b8f', off: true },
  { name: 'Przycięte (maska)', kind: 'raster', off: true, memory: true, open: true },
  { name: '57', kind: 'black', legend: true },
  { name: '249', kind: 'none', legend: true },
  { name: 'shapefiles railroads', kind: 'line', color: '#a0522d', off: true },
  { name: 'shapefiles regions', kind: 'fill', color: '#beb297', off: true },
  { name: 'shapefiles rivers', kind: 'line', color: '#c43c39', off: true },
  { name: 'shapefiles storagep', kind: 'dot', color: '#e5b636', off: true },
  { name: 'shapefiles swamp', kind: 'fill', color: '#e15989', off: true },
  { name: 'shapefiles trails', kind: 'line', color: '#b7d04b', off: true },
  { name: 'shapefiles trees', kind: 'fill', color: '#987db7', off: true },
  { name: 'shapefiles tundra', kind: 'fill', color: '#e77148', off: true },
  { name: '', kind: 'none', off: true },
];

const STATS = [['Liczba', '22'], ['Suma', '268.51'], ['Średnia', '12.205'], ['Mediana', '8.015'], ['Odchylenie standardowe (pop)', '11.7697']];

/* ---------- map ---------- */

const LAND = '#ffffe8';

const LABELS = [
  ['Nome', 792, 831.5, 480.5], ['Yukon-Koyukuk', 978, 1080, 555], ['Denali', 1348, 1387.5, 502],
  ['Southeast Fairbanks', 1652, 1783, 493.5], ['Matanuska-Susitna', 1351, 1473, 663], ['Bethel', 948, 989.5, 782],
  ['Dillingham', 907, 969.5, 900], ['Lake and Peninsula', 1058.5, 1181, 899], ['Anchorage', 1414.5, 1483.5, 802],
  ['Kenai Peninsula', 1350, 1448.5, 897.5], ['Valdez-Cordova', 1675, 1775.5, 723.5], ['on', 757, 773.5, 659],
];

const SUSITNA = '1220.1,616.3 1281.4,614.7 1281.4,606 1408.2,535.7 1488.2,529.3 1486.7,511 1568.6,503 1575.2,556.7 1575.9,565.3 1578.3,565.3 1580.6,578.3 1585.2,618.7 1589.1,650 1558.5,653.7 1559,663.3 1560.9,665 1564.7,700 1565.5,705 1570.5,747.3 1555.8,749 1555.5,754 1484,761 1443,764.3 1442.2,761 1438,757.3 1433.3,756.3 1430,758 1425,758.5 1420.6,756.7 1415.2,759 1410.1,765 1408.2,770 1403.2,772.7 1401.3,780 1399.7,788.3 1394.7,788.7 1379.2,789.3 1369.6,791 1366,787 1364.5,783.3 1361.8,787.3 1359.5,786 1358,783.3 1357.6,789 1354,790 1350.2,795 1341,797.7 1340.2,791.7 1319.7,792.3 1318.6,771.3 1221.8,774 1221.8,763.3 1223.2,762.7 1221.8,720 1220.8,679.3';

const NORTHWEST_BORDERS = [
  '272,26 262,125 295,130 288,223 258,220 254,251 227,249 223,280 165,275 161,306 131,302 125,365 129,367 126,397 95,394 86,489 72,490 69,526 61,527 47,652 39,651 27,777 47,779 38,873 310,898 313,859 437,868 440,836 674,851 673,890 954,900 1215,903 1215,855 1274,855 1274,823 1327,823 1327,794 1336,794',
  '8,479 86,488',
  '1336,649 1424,494 1424,437 1393,436 1393,423 1363,423 1363,376 1351,376 1351,313 1451,310 1451,247 1476,247 1474,183 1511,182 1508,170 1510,156 1549,156 1550,160 1558,160 1558,170 1568,174',
];

const NORTHEAST_BORDERS = [
  '0,174 5,180 28,179 95,38 255,26', '307,26 309,34 410,26',
  '470,26 477,33 484,37 494,47 600,36 649,30 650,26',
  '525,46 528,70 534,88 538,105 547,113 557,125 551,138 548,152 537,157 532,165 527,172 532,185 529,196 528,205 524,212 519,220 525,228 533,230 537,232 538,240 545,245 543,258 552,261 567,262 570,270 585,274 575,288 567,295 550,298 545,310 540,316 538,325',
  '712,470 765,463 759,400 892,380 896,411 1000,397 1178,361 1183,380 1187,398 1193,400 1196,406 1204,410 1199,428 1197,445 1188,462 1182,470 1190,480 1200,484 1212,488 1203,503 1204,515 1198,532 1204,541 1210,542 1216,539 1222,544 1230,544 1236,539 1247,538 1249,520 1255,518 1257,496 1262,496 1268,504 1275,502 1280,500 1286,502 1315,496 1319,525 1347,520 1351,551 1376,547 1394,674 1390,676 1391,688 1419,683 1433,762 1548,737',
];

const SOUTHWEST_BORDERS = [
  '96,40 100,58 108,70 120,77 132,78 138,75 142,82 149,86 147,94 138,91 128,87 118,88 105,95 90,102 80,106 60,108 35,118 8,137',
  '113,820 117,770 147,772 151,710 161,711 165,680 193,682 199,620 228,622 231,591 264,592 268,530 275,530 277,500 306,501 309,470 330,472 333,441 497,451 497,485 525,485 527,454 555,455 557,424 614,427 614,460 804,467 1225,472',
  '804,467 797,750 795,750 793,820',
  '1293,281 1275,262 1216,261 1217,377 1224,377 1226,503 1233,503 1234,630 1212,630 1213,755 1191,756 1191,820',
];

const SOUTHEAST_BORDERS = ['476,243 490,452 449,455 450,499 406,502 405,466', '450,499 466,498 473,612 486,612 496,780'];

const COOK_INLET = '80,410 55,422 30,430 12,445 -4,461 -9,466 -18,490 -8,515 -2,535 -16,530 -20,522 -24,531 -34,537 -46,548 -53,562 -59,582 -70,590 -84,604 -94,625 -92,640 -79,655 -99,668 -102,690 -117,703 -127,718 -140,712 -154,714 -163,708 -173,710 -178,698 -188,690 -200,690 -210,697 -210,703 -204,694 -193,695 -184,702 -180,712 -164,722 -156,732 -145,735 -140,755 -129,768 -127,785 -136,802 -147,822 2,822 5,790 20,755 36,728 48,710 51,680 53,652 65,655 66,600 74,597 66,592 62,590 58,565 45,545 48,530 65,520 72,510 100,502 130,470 155,440 178,424 197,408 205,425 212,436 225,448 240,450 260,445 275,432 285,428 305,440 335,440 350,450 375,448 392,458 400,467 408,468 408,460 400,447 380,434 355,430 340,420 315,415 290,407 280,395 262,381 241,360 252,348 262,340 270,325 272,300 290,290 290,278 320,260 345,240 357,232 330,232 300,234 285,258 270,280 263,322 240,326 180,333 130,345 106,353 98,365 85,395';

const SOUND = '345,822 352,800 368,795 360,760 356,735 363,728 370,745 372,765 378,780 377,800 380,818 388,818 395,790 403,765 415,750 424,738 420,748 410,765 412,780 420,785 427,776 435,778 440,790 455,785 460,772 465,775 475,787 483,783 490,790 500,780 495,770 505,755 515,770 520,775 522,745 530,735 527,710 535,697 525,690 515,692 520,675 522,660 530,665 545,655 552,640 545,630 555,620 550,610 560,600 568,605 575,590 568,580 577,572 570,560 560,570 550,560 545,575 535,565 550,545 545,540 530,560 522,565 520,580 528,590 518,590 512,570 500,568 515,560 530,545 545,530 550,515 545,500 530,510 520,500 510,530 500,525 498,512 505,505 510,485 495,490 480,490 465,515 460,525 458,515 468,495 480,480 470,478 455,482 465,470 485,462 500,470 510,465 515,440 508,425 514,414 520,416 526,400 532,396 532,375 528,365 537,380 545,390 552,375 560,350 575,320 582,290 588,287 592,290 590,305 575,345 560,385 555,400 545,415 560,425 570,445 575,460 590,455 585,445 592,430 600,440 600,420 595,410 610,415 606,428 612,420 612,390 615,355 618,345 622,330 628,345 627,360 630,375 628,395 636,405 640,400 645,425 648,405 655,400 660,420 662,405 665,390 672,402 670,385 675,375 682,395 690,380 696,392 698,376 705,375 710,395 725,397 735,360 750,345 755,325 765,318 785,318 810,322 822,312 822,322 810,330 790,330 770,335 755,340 760,350 770,352 780,362 765,358 752,366 750,375 760,372 748,385 770,388 760,395 745,396 740,410 752,402 755,418 765,405 768,425 772,412 785,430 800,435 825,425 832,418 828,405 835,402 845,412 830,425 820,440 800,445 790,442 785,450 765,450 755,462 762,472 775,470 785,455 800,452 795,475 805,482 815,475 840,455 848,444 855,433 860,440 850,455 845,465 835,475 832,492 850,490 860,470 880,460 890,468 880,480 880,492 895,490 910,485 925,468 918,490 910,500 908,515 905,535 885,545 900,542 920,540 940,545 965,560 960,545 975,555 978,540 985,560 1000,570 1008,552 1010,560 1005,580 1020,584 1015,555 1025,540 1020,520 1032,500 1045,500 1038,490 1047,485 1046,466 1052,466 1055,490 1045,505 1055,520 1068,520 1050,530 1054,545 1045,552 1047,570 1055,590 1065,580 1075,585 1086,583 1090,600 1100,610 1105,605 1115,612 1130,607 1140,617 1160,610 1165,597 1170,610 1187,605 1170,625 1185,640 1200,650 1205,660 1220,665 1240,650 1260,643 1300,625 1340,615 1380,594 1410,592 1450,597 1500,597 1530,600 1550,613 1556,615 1570,612 1570,822';

const ISLANDS = [
  '605,818 603,800 610,797 620,797 615,780 627,775 635,760 632,750 650,740 665,735 672,718 680,710 678,695 688,690 700,675 690,660 700,655 705,650 720,640 735,622 743,628 725,650 712,672 705,680 690,700 683,712 680,730 690,755 675,752 677,765 665,780 672,790 670,800 660,797 645,802 640,815 620,820',
  '775,560 783,563 790,552 800,554 808,550 825,555 822,570 830,577 850,570 860,565 865,572 858,582 850,590 835,595 825,600 815,610 805,625 790,642 777,630 782,622 790,620 800,605 785,607 770,600 768,580',
  '830,560 845,540 860,530 880,520 895,510 915,505 912,515 900,525 880,540 865,552 845,560 825,574',
  '600,575 608,580 615,570 625,560 624,543 633,540 635,550 626,562 620,580 625,600 615,607 618,615 628,620 620,640 626,655 610,660 618,672 615,690 605,680 598,685 600,665 587,670 590,640 600,632 597,618 602,605 595,605',
  '545,450 542,432 552,418 562,430 570,448 560,458 552,468 540,465',
  '565,485 575,482 588,495 580,508 570,510 562,497', '640,478 655,477 653,490 662,485 668,498 660,515 650,510 642,518 645,500 638,490',
  '665,415 680,408 697,413 692,425 680,430 668,425', '738,422 750,418 757,428 750,440 740,436', '655,645 670,635 677,640 665,658 653,660',
  '700,603 710,600 706,615 725,612 722,630 705,640 695,635 703,622', '210,375 212,365 220,356 227,358 222,372',
  '-31,610 -19,615 -25,635 -39,640 -34,650 -43,668 -53,672 -53,665 -41,655 -39,630',
  '1120,752 1125,730 1140,705 1155,682 1168,670 1170,675 1155,700 1135,725 1128,745',
  '552,620 565,618 573,630 572,648 560,650 553,640', '540,665 556,660 572,668 578,680 560,680 548,676', '582,682 592,675 600,690 613,688 605,700 590,695',
  '536,708 548,695 560,705 556,722 570,712 575,724 560,740 548,735 552,750 540,745', '575,740 590,715 600,720 585,745 570,768 560,775',
  '590,755 604,728 608,738 598,765 580,775', '535,755 550,758 545,770', '586,640 596,636 592,668 584,670', '530,500 543,480 550,497 548,515 538,520',
  '508,440 520,430 525,445 515,455', '1028,520 1040,508 1045,525 1032,535', '575,690 590,700 580,712',
];

const SPECKS = [[602, 503], [583, 465], [597, 455], [605, 461], [573, 505], [655, 505], [545, 485], [560, 440], [686, 420], [748, 430], [522, 690], [618, 600], [608, 615], [540, 725], [565, 700], [550, 740], [585, 758], [1010, 568], [1035, 515], [1050, 520], [686, 790], [625, 560], [605, 648], [770, 465], [612, 405], [650, 412]];

const BARRIER = ['862,556 882,545 870,562 885,568', '890,568 908,571', '912,570 922,575', '926,565 940,566', '944,578 948,592 962,592', '968,600 985,603', '990,604 1002,610', '1008,610 1022,607', '1028,610 1048,608', '1055,607 1080,606', '1085,604 1100,603', '1140,618 1144,630', '1144,640 1144,652', '1144,660 1146,680', '1162,660 1200,656 1206,650', '1150,612 1180,630', '660,552 674,549'];

const Coast = styled.g`
  stroke: #a6a69c;
  stroke-width: 1.3;
  stroke-linejoin: round;
  fill: none;
  * { vector-effect: non-scaling-stroke; }
`;

const BarrierIslands = styled.g`
  stroke-width: 1.8;
`;

const Borders = styled.g`
  stroke: #7d7d70;
  stroke-width: 1.15;
  fill: none;
  * { vector-effect: non-scaling-stroke; }
`;

const MapText = styled.text`
  font-family: "Open Sans", "Noto Sans", sans-serif;
  font-size: 13.8px;
`;

const NW = 'translate(760 400) scale(.34439 .33333)';
const NE = 'translate(1300 400) scale(.38648 .33333)';
const SW = 'translate(760 680) scale(.35714 .33333)';
const SE = 'translate(1300 680) scale(.38648 .33333)';

const lines = (list) => list.map((p) => <polyline key={p} points={p} />);

const Map = () => (
  <svg width="1143" height="544" viewBox="763 409 1143 544">
    <rect x="763" y="409" width="1143" height="544" fill={LAND} />
    <Coast transform={NW}>
      <polygon fill="#fff" points="0,20 100,20 103,27 115,48 111,100 116,130 122,150 127,175 130,195 127,218 118,235 105,245 100,258 92,266 82,265 78,280 75,285 67,288 65,296 58,305 40,312 30,311 20,314 8,317 0,320" />
      <path d="M56 83L55 75L61 71L62 77Z" strokeWidth="1.5" />
    </Coast>
    <Coast transform={NE}>
      <polygon fill="#fff" points="1427,20 1450,170 1500,460 1548,737 1570,860 1600,860 1600,20" />
    </Coast>
    <Coast transform={SE}>
      <polygon fill="#fff" points={COOK_INLET} />
      <polygon fill="#fff" points={SOUND} />
      <polygon fill="#fff" points="312,822 318,797 322,797 328,808 325,822" />
      <polygon fill={LAND} points="-137,735 -132,736 -127,765 -134,760" />
      {ISLANDS.map((p) => <polygon key={p} points={p} fill={LAND} />)}
      {SPECKS.map(([x, y]) => (
        <path key={`${x}-${y}`} d={`M${x - 6} ${y + 4}L${x - 2} ${y - 7}L${x + 4} ${y - 3}L${x + 2} ${y + 3}L${x + 6} ${y + 6}L${x - 1} ${y + 8}Z`} fill={LAND} />
      ))}
      <BarrierIslands>{lines(BARRIER)}</BarrierIslands>
    </Coast>
    <Borders transform={NW}>{lines(NORTHWEST_BORDERS)}</Borders>
    <Borders transform={NE}>{lines(NORTHEAST_BORDERS)}</Borders>
    <Borders transform={SW}>{lines(SOUTHWEST_BORDERS)}</Borders>
    <Borders transform={SE}>{lines(SOUTHEAST_BORDERS)}</Borders>
    <polygon points={SUSITNA} fill="#ff0" stroke="#222200" strokeWidth="1.2" />
    <g fill="none" stroke="#ee7278" strokeWidth="1.4">
      <polyline vectorEffect="non-scaling-stroke" transform={NE} points="332,403 326,412 320,425 315,438 303,455 292,467 285,484 278,498 275,512 271,518 270,530 266,541 265,553 270,560 277,565 275,578 270,590 271,598 265,605 266,618 258,629 245,637 241,648 230,657 222,672 213,690 214,705 212,720 212,733 209,745 211,770 213,800 217,812 216,820 221,832 219,848 222,855 222,872 227,885 232,900 230,950 232,975 238,995 248,1015 265,1025 280,1038 310,1040 330,1043 345,1048 362,1049 368,1044" />
      <polyline vectorEffect="non-scaling-stroke" transform={SE} points="358,209 357,232" />
    </g>
    <path d="M1383.4 711.2L1393 720.8M1393 711.2L1383.4 720.8" stroke="#f01414" strokeWidth="1.6" />
    {LABELS.map(([t, x0, x1, y]) => (
      <MapText key={t} x={x0} y={y} textLength={x1 - x0} lengthAdjust="spacingAndGlyphs">{t}</MapText>
    ))}
  </svg>
);

/* ---------- page ---------- */

const Tools = ({ items }) => (
  <ToolBar>
    {items.map((it, i) => {
      if (Array.isArray(it)) {
        if (it[0] === 'grip') return <Grip key={i} $w={it[1]} />;
        if (it[0] === 'line') return <Divider key={i} $w={it[1]} />;
        return <ArrowCell key={i}><Arrow /></ArrowCell>;
      }
      return (
        <ToolCell key={i}>
          <ToolButton $on={it.endsWith('*')} $off={it.endsWith('-')}><Icon name={it.replace(/[*-]/, '')} /></ToolButton>
        </ToolCell>
      );
    })}
  </ToolBar>
);

const HiddenDefs = styled.svg`
  position: absolute;
`;

export default function App() {
  return (
    <Window>
      <GlobalStyle />
      <HiddenDefs width="0" height="0">
        <defs>
          <linearGradient id="polyFill" x1="0" y1="0" x2="1" y2="1">
            <stop offset="0" stopColor="#fff" /><stop offset="1" stopColor="#a3bfe0" />
          </linearGradient>
        </defs>
      </HiddenDefs>
      <MenuBar>
        {MENU.map(([a, u, b, w]) => <MenuItem key={a + u + b} $w={w}>{a}{u && <u>{u}</u>}{b}</MenuItem>)}
      </MenuBar>
      <Tools items={BAR_ONE} />
      <Tools items={BAR_TWO} />
      <Main>
        <LeftColumn>
          <DockTitle $h={21} $x={-4}><span>Przeglądarka</span><DockGlyph /><DockGlyph close /></DockTitle>
          <DockTools $h={29}>
            <SmallCell $w={16}><Icon name="addLayer" size={16} /></SmallCell>
            <SmallCell $w={34}><Icon name="refresh" size={15} /></SmallCell>
            <SmallCell $w={16}><Icon name="funnel" size={15} /></SmallCell>
            <SmallCell $w={35}><Icon name="collapse" size={15} /></SmallCell>
            <SmallCell $w={14}><Icon name="info" size={15} /></SmallCell>
          </DockTools>
          <Frame $h={259}>
            <Rows>
              {FILES.map((f) => (
                <FileRow key={f} $on={f === 'railroads'}>
                  <FileIcon><PolygonIcon on={f === 'railroads'} /></FileIcon>
                  {f}.shp
                </FileRow>
              ))}
            </Rows>
            <Scroll before={106} thumb={34} after={83} />
          </Frame>
          <HSplitter $h={7} $x={367} $top={3} />
          <DockTitle $h={21} $x={-4}><span>Warstwy</span><DockGlyph /><DockGlyph close /></DockTitle>
          <DockTools $h={29}>
            <SmallCell $w={16}><Icon name="brush" size={16} /></SmallCell>
            <SmallCell $w={34}><Icon name="group" size={16} /></SmallCell>
            <SmallCell $w={19}><Icon name="eye" size={18} /></SmallCell>
            <SmallCell $w={28}><Icon name="funnel" size={15} /></SmallCell>
            <SmallCell $w={24}><Icon name="epsilon" size={16} /></SmallCell>
            <SmallCell $w={13}><Arrow /></SmallCell>
            <SmallCell $w={29}><Icon name="expand" size={15} /></SmallCell>
            <SmallCell $w={21}><Icon name="collapse" size={15} /></SmallCell>
            <SmallCell $w={28}><Icon name="remove" size={16} /></SmallCell>
          </DockTools>
          <Frame $h={490}>
            <Rows>
              {LAYERS.map((l) => (
                <LayerRow key={l.name} $on={l.active}>
                  <Expander>{l.open && <Arrow w={10} />}</Expander>
                  <CheckBox $none={l.legend}>{l.checked && <Check />}</CheckBox>
                  <SymbolCell $tight={l.active}><Symbol kind={l.kind} color={l.color} /></SymbolCell>
                  <LayerName $off={l.off} $under={l.active} $plain={l.legend}>{l.name}</LayerName>
                  {l.memory && <MemoryBadge><Icon name="memory" size={14} /></MemoryBadge>}
                  <RowMark $none={l.legend} />
                </LayerRow>
              ))}
            </Rows>
            <Scroll before={0} thumb={438} after={16} first />
          </Frame>
        </LeftColumn>
        <VSplitter />
        <RightColumn>
          <DockTitle $h={19} $x={4} $drop={2}><span>Statystyki</span><DockGlyph /><DockGlyph close /></DockTitle>
          <ComboBox><Icon name="lineGrey" size={21} /><span>Przycięte</span><Arrow w={10} /></ComboBox>
          <FieldLine>
            <FieldEdit>
              <FieldType>1.2</FieldType>
              <FieldValue>length_km</FieldValue>
              <FieldDrop><Arrow w={10} /></FieldDrop>
            </FieldEdit>
            <FlatButton $h={28} $pad={3}><Icon name="epsilonBig" size={17} /></FlatButton>
          </FieldLine>
          <Frame $h={192} $left>
            <TableArea>
              <TableHead>
                <HeadLine><HeadCell>Statystyka</HeadCell><HeadCell $last>Wartość</HeadCell></HeadLine>
              </TableHead>
              {STATS.map(([k, v], i) => (
                <TableLine key={k} $alt={i % 2 === 1}><Cell>{k}</Cell><Cell>{v}</Cell></TableLine>
              ))}
            </TableArea>
            <Scroll before={0} thumb={40} after={116} first />
          </Frame>
          <OptionLine>
            <CheckBox />
            <OptionText>Tylko zaznaczone obiekty</OptionText>
            <OptionIcon $w={31} $dim><Icon name="copy" size={18} /></OptionIcon>
            <OptionIcon $w={27}><Icon name="refresh" size={19} /></OptionIcon>
            <FlatButton $h={23} $pad={8}><b>…</b></FlatButton>
          </OptionLine>
          <HSplitter $h={5} $x={568} $top={1} />
          <MapFrame><Map /></MapFrame>
        </RightColumn>
      </Main>
    </Window>
  );
}
